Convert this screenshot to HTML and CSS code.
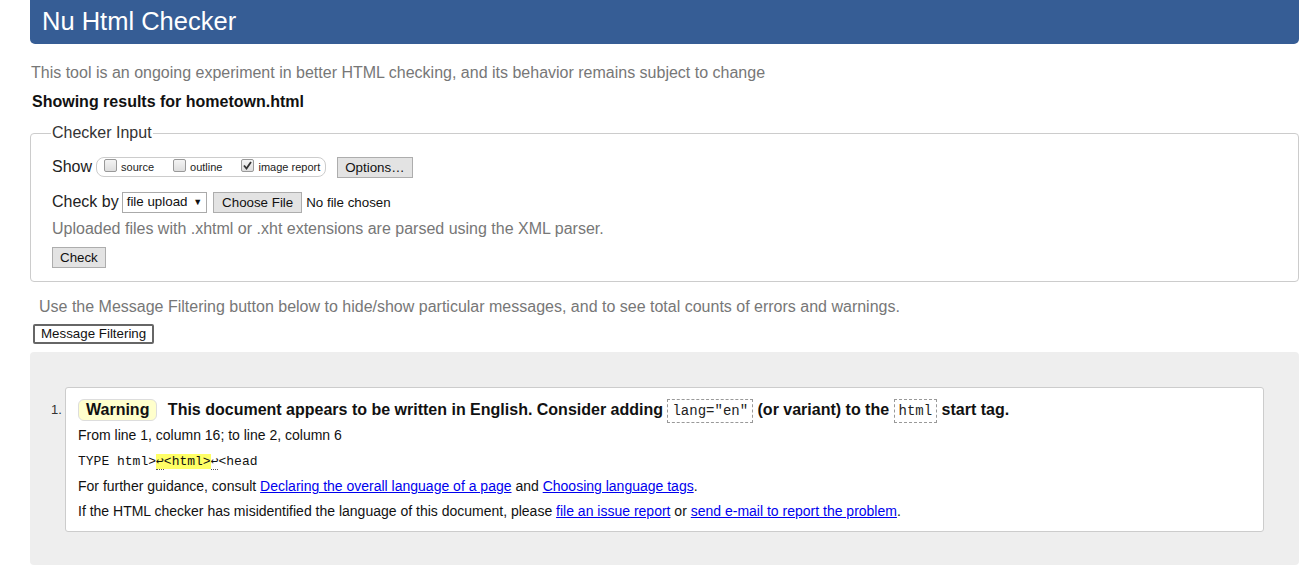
FILE: index.html
```html
<!DOCTYPE html>
<html>
<head>
<meta charset="utf-8">
<link rel="stylesheet" href="styles.css">
</head>
<body>
<div class="page">
  <h1 class="banner">Nu Html Checker</h1>
  <p class="intro">This tool is an ongoing experiment in better HTML checking, and its behavior remains subject to change</p>
  <p class="showing">Showing results for hometown.html</p>
  <fieldset class="checker">
    <legend>Checker Input</legend>
    <div class="row show-row">
      <span class="lbl">Show</span>
      <span class="pill">
        <span class="opt"><span class="cb"></span><span class="optl">source</span></span>
        <span class="opt"><span class="cb"></span><span class="optl">outline</span></span>
        <span class="opt"><span class="cb checked"><svg viewBox="0 0 13 13" width="13" height="13"><path d="M3 6.5 L5.5 9.5 L10 3" fill="none" stroke="#333" stroke-width="1.8"/></svg></span><span class="optl">image report</span></span>
      </span>
      <span class="btn">Options…</span>
    </div>
    <div class="row checkby-row">
      <span class="lbl">Check by</span>
      <span class="select">file upload <span class="arrow">▼</span></span>
      <span class="btn">Choose File</span>
      <span class="nofile">No file chosen</span>
    </div>
    <p class="hint">Uploaded files with .xhtml or .xht extensions are parsed using the XML parser.</p>
    <div class="row"><span class="btn">Check</span></div>
  </fieldset>
  <p class="filter-note">Use the Message Filtering button below to hide/show particular messages, and to see total counts of errors and warnings.</p>
  <div class="filter-btn">Message Filtering</div>
  <div class="results">
    <ol class="msgs">
      <li class="msg">
        <p class="msg-head"><span class="badge">Warning</span> <span class="msg-text">This document appears to be written in English. Consider adding <code class="box">lang="en"</code> (or variant) to the <code class="box">html</code> start tag.</span></p>
        <p class="loc">From line 1, column 16; to line 2, column 6</p>
        <p class="extract"><code>TYPE html&gt;<mark><span class="lf">↩</span>&lt;html&gt;</mark><span class="lf">↩</span>&lt;head</code></p>
        <p class="info">For further guidance, consult <a href="#">Declaring the overall language of a page</a> and <a href="#">Choosing language tags</a>.</p>
        <p class="info">If the HTML checker has misidentified the language of this document, please <a href="#">file an issue report</a> or <a href="#">send e-mail to report the problem</a>.</p>
      </li>
    </ol>
  </div>
</div>
</body>
</html>
```

FILE: styles.css
```css
* { box-sizing: border-box; }
body {
  margin: 0;
  font-family: "Liberation Sans", Arial, sans-serif;
  color: #222;
  background: #fff;
}
.page {
  margin: 0 17px 0 30px;
  padding-bottom: 14px;
}
.banner {
  margin: 0;
  height: 44px;
  background: #365d95;
  color: #fff;
  font-weight: normal;
  font-size: 25.5px;
  line-height: 42px;
  padding-left: 12px;
  border-radius: 0 0 5px 5px;
}
.intro {
  margin: 19px 0 0 1px;
  font-size: 16px;
  line-height: 20px;
  color: #777;
}
.showing {
  margin: 9px 0 0 2px;
  font-size: 16px;
  font-weight: bold;
  line-height: 20px;
  color: #111;
}
.checker {
  margin: 12px 0 0 0;
  border: 1px solid #ccc;
  border-radius: 4px;
  padding: 6px 21px 13px 21px;
}
.checker legend {
  font-size: 16px;
  color: #333;
  padding: 0 1px;
  margin-left: -1px;
  line-height: 18px;
}
.row {
  display: flex;
  align-items: center;
}
.show-row { height: 22px; margin-top: 8px; }
.lbl { font-size: 16px; color: #222; margin-right: 4px; }
.pill {
  display: inline-flex;
  align-items: center;
  border: 1px solid #ccc;
  border-radius: 8px;
  height: 20px;
  padding: 0 5px 0 7px;
  gap: 19px;
  margin-right: 11px;
}
.opt { display: inline-flex; align-items: center; }
.cb {
  display: inline-block;
  width: 13px; height: 13px;
  border: 1px solid #999;
  border-radius: 2px;
  background: linear-gradient(#f4f4f4, #dedede);
  margin-right: 4px;
  position: relative;
  top: -2px;
}
.cb svg { position: absolute; left: -1px; top: -1px; }
.optl { font-size: 11px; color: #222; }
.btn {
  display: inline-block;
  font-size: 13.33px;
  line-height: 19px;
  padding: 0 7px;
  background: #e3e3e3;
  border: 1px solid #adadad;
  color: #111;
}
.checkby-row { margin-top: 13px; height: 22px; }
.select {
  display: inline-block;
  font-size: 13.33px;
  line-height: 18px;
  border: 1px solid #aaa;
  background: #fff;
  padding: 0 4px 0 4px;
  margin-right: 6px;
  margin-left: -1px;
  color: #111;
}
.checkby-row .btn { padding: 0 8px; }
.arrow { font-size: 9px; margin-left: 2px; position: relative; top: -1px; }
.nofile { font-size: 13.33px; margin-left: 4px; color: #111; }
.hint {
  margin: 5px 0 7px 0;
  font-size: 16px;
  line-height: 22px;
  color: #777;
}
.filter-note {
  margin: 15px 0 0 9px;
  font-size: 16px;
  line-height: 20px;
  color: #777;
}
.filter-btn {
  display: block;
  width: max-content;
  margin: 7px 0 0 3px;
  font-size: 13.33px;
  line-height: 16px;
  padding: 0 6px;
  height: 20px;
  border: 2px solid #666;
  border-radius: 2px;
  background: #fff;
  color: #111;
}
.results {
  margin-top: 8px;
  background: #eee;
  border-radius: 4px;
  padding: 35px 35px 33px 35px;
}
.msgs {
  margin: 0;
  padding: 0;
  list-style: none;
  counter-reset: m;
}
.msg {
  counter-increment: m;
  position: relative;
  background: #fff;
  border: 1px solid #ccc;
  border-radius: 3px;
  padding: 10px 12px 7px 12px;
}
.msg::before {
  content: counter(m) ".";
  position: absolute;
  left: -15px;
  top: 14px;
  font-size: 13px;
  color: #333;
}
.msg-head {
  margin: 0;
  font-size: 16px;
  font-weight: bold;
  line-height: 24px;
  color: #111;
}
.badge {
  display: inline-block;
  background: #ffc;
  border: 1px solid #ddd;
  border-radius: 6px;
  padding: 0 7px;
  line-height: 20px;
  margin-right: 6px;
}
.box {
  display: inline-block;
  font-family: "Liberation Mono", "DejaVu Sans Mono", monospace;
  font-weight: normal;
  font-size: 14px;
  border: 1px dashed #999;
  padding: 0 4px;
  line-height: 22px;
  color: #222;
}
.loc, .info, .extract {
  margin: 0;
  font-size: 14px;
  line-height: 25px;
  color: #111;
}
.extract code {
  font-family: "Liberation Mono", "DejaVu Sans Mono", monospace;
  font-size: 13px;
}
mark { background: #ff6; color: #111; }
.lf { border-bottom: 1px dotted #555; }
a { color: #00e; }
```
